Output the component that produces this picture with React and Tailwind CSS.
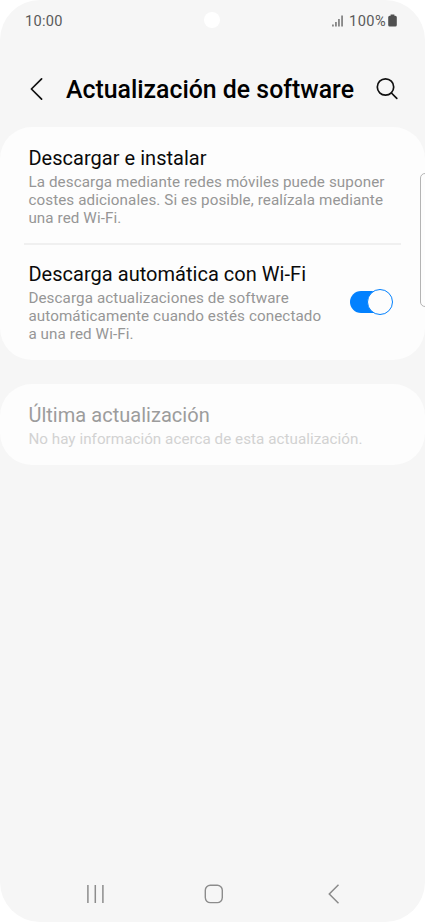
// App.jsx
const StatusBar = () => (
  <div className="relative flex h-[42px] items-center justify-between pl-[25px] pr-[28px] text-[14.6px] text-[#5a5a5a]">
    <span className="pt-[2px] tracking-[0.25px]">10:00</span>
    <span className="absolute left-[204px] top-[12px] size-4 rounded-full bg-white" />
    <div className="flex items-center">
      <svg width="12" height="12" viewBox="0 0 12 12" className="mr-[5px]" fill="#5a5a5a">
        <rect x="0.3" y="9.5" width="1.3" height="2" />
        <rect x="3.3" y="7" width="1.3" height="4.5" />
        <rect x="6.3" y="4" width="1.3" height="7.5" />
        <rect x="9.4" y="0.5" width="1.3" height="11" />
      </svg>
      <span className="pt-[2px] tracking-[0.4px]">100%</span>
      <svg width="9" height="13" viewBox="0 0 9 13" className="ml-[2px]" fill="#505050">
        <path d="M2.6 0.4h3.8v1.3h0.9a1.5 1.5 0 0 1 1.5 1.5v7.8a1.5 1.5 0 0 1-1.5 1.5h-5.6a1.5 1.5 0 0 1-1.5-1.5v-7.8a1.5 1.5 0 0 1 1.5-1.5h0.9z" />
      </svg>
    </div>
  </div>
);

const Header = () => (
  <header className="flex h-[85px] items-center pl-[29px] pr-[26px] pt-[9px]">
    <button aria-label="Atrás">
      <svg width="16" height="24" viewBox="0 0 16 24" fill="none" stroke="#111" strokeWidth="1.7" strokeLinecap="round" strokeLinejoin="round">
        <path d="M12.6 1.8L2.4 12l10.2 10.2" />
      </svg>
    </button>
    <h1 className="ml-[21px] whitespace-nowrap pt-[2px] text-[24.85px] font-medium leading-[30px] text-black">
      Actualización de software
    </h1>
    <button aria-label="Buscar" className="ml-auto">
      <svg width="24" height="24" viewBox="0 0 24 24" fill="none" stroke="#111" strokeWidth="1.7" strokeLinecap="round">
        <circle cx="10.5" cy="10" r="8.2" />
        <path d="M16.4 16l5.4 5.4" />
      </svg>
    </button>
  </header>
);

const Toggle = () => (
  <button role="switch" aria-checked="true" aria-label="Descarga automática con Wi-Fi" className="flex h-[26px] w-[43px] items-center">
    <span className="flex h-[22px] w-[42px] items-center justify-end rounded-full bg-[#0381fe]">
      <span className="-mr-px size-[26px] shrink-0 rounded-full border border-[#0381fe] bg-[#fdfdfd]" />
    </span>
  </button>
);

const Item = ({ title, lines, disabled, children }) => (
  <div className="flex items-center justify-between pl-[28.4px] pr-[32px]">
    <div>
      <h2 className={`text-[20px] leading-[26px] tracking-[0.03px] ${disabled ? "text-[#9c9c9c]" : "text-[#0a0a0a]"}`}>{title}</h2>
      <p className={`whitespace-nowrap pt-[2px] text-[15.2px] leading-[18px] ${disabled ? "tracking-[0.04px] text-[#d2d2d2]" : "tracking-[0.1px] text-[#969696]"}`}>
        {lines.map((line) => (
          <span key={line} className="block">{line}</span>
        ))}
      </p>
    </div>
    {children}
  </div>
);

const NavBar = () => (
  <nav className="mt-auto flex h-[57px] items-center justify-between pl-[85px] pr-[82px]">
    <svg width="20" height="20" viewBox="0 0 20 20" stroke="#8c8c8c" strokeWidth="1.5">
      <path d="M2.9 1v18M10.3 1v18M17.9 1v18" />
    </svg>
    <svg width="20" height="20" viewBox="0 0 20 20" fill="none" stroke="#8c8c8c" strokeWidth="1.4">
      <rect x="1.3" y="1.2" width="17" height="17.4" rx="5" />
    </svg>
    <svg width="20" height="20" viewBox="0 0 20 20" fill="none" stroke="#8c8c8c" strokeWidth="1.5">
      <path d="M15.5 0.8L6.3 10l9.2 9.2" />
    </svg>
  </nav>
);

const App = () => {
  return (
    <div className="h-[922px] w-[425px] overflow-hidden bg-white font-['Roboto',sans-serif]">
      <div className="relative flex h-full flex-col overflow-hidden rounded-[40px] bg-[#f6f6f6]">
        <StatusBar />
        <Header />

        <main>
          <section className="h-[233px] rounded-[32px] bg-[#fdfdfd] pt-[17.5px]">
            <Item
              title="Descargar e instalar"
              lines={[
                "La descarga mediante redes móviles puede suponer",
                "costes adicionales. Si es posible, realízala mediante",
                "una red Wi-Fi.",
              ]}
            />
            <hr className="mx-6 mb-4 mt-[16.5px] border-t-2 border-[#f0f0f0]" />
            <Item
              title="Descarga automática con Wi-Fi"
              lines={[
                "Descarga actualizaciones de software",
                "automáticamente cuando estés conectado",
                "a una red Wi-Fi.",
              ]}
            >
              <Toggle />
            </Item>
          </section>

          <section className="mt-6 h-[81px] rounded-[32px] bg-[#fdfdfd] pt-[18px]">
            <Item title="Última actualización" lines={["No hay información acerca de esta actualización."]} disabled />
          </section>
        </main>

        <NavBar />

        {/* edge panel handle */}
        <span className="absolute -right-[6px] top-[173px] h-[134px] w-[11px] rounded-[5px] border border-[#b4b4b4] bg-[#fdfdfd]" />
      </div>
    </div>
  );
};

export default App;
